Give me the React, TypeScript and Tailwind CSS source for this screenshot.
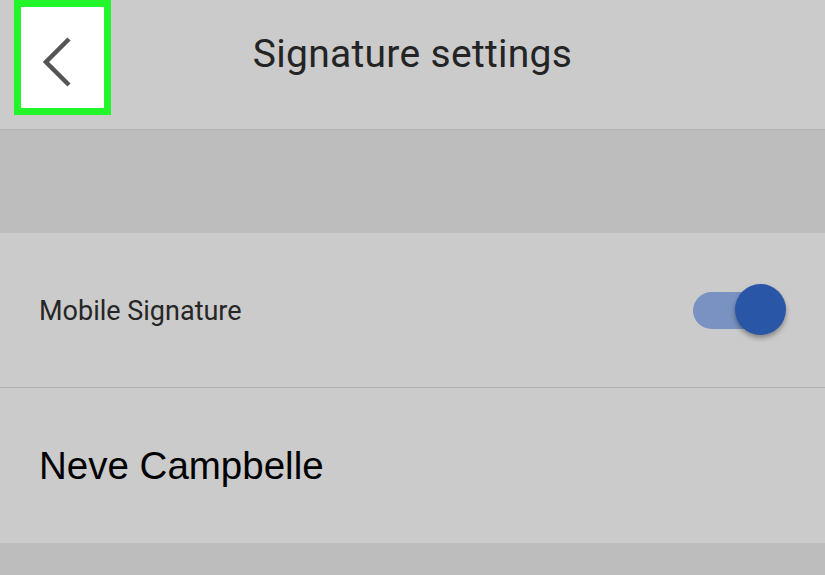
import React from "react";

export default function App() {
  return (
    <div className="w-[825px] h-[575px] overflow-hidden bg-[#cbcbcb] flex flex-col" style={{ fontFamily: "Roboto, 'Liberation Sans', sans-serif" }}>
      <div className="relative h-[130px] shrink-0 border-b border-[#b4b4b4] flex items-center justify-center">
        <div className="absolute left-[14px] top-0 w-[97px] h-[115px] border-[7px] border-[#22f52a] bg-white flex items-center justify-center">
          <svg width="40" height="60" viewBox="0 0 40 60">
            <path d="M26 11 L3 34 L26 57" fill="none" stroke="#555" strokeWidth="4.5" strokeLinecap="butt" strokeLinejoin="miter" />
          </svg>
        </div>
        <div className="text-[39px] text-[#242424] -mt-[20px] tracking-[0.3px]">Signature settings</div>
      </div>
      <div className="h-[103px] shrink-0 bg-[#bdbdbd]" />
      <div className="h-[155px] shrink-0 border-b border-[#b0b0b0] flex items-center justify-between pl-[39px] pr-[39px]">
        <div className="text-[27px] text-[#262626] mt-[2px]">Mobile Signature</div>
        <div className="relative w-[93px] h-[52px]">
          <div className="absolute left-0 top-[8px] w-[88px] h-[37px] rounded-full bg-[#7a92c2]" />
          <div className="absolute left-[42px] top-0 w-[51px] h-[51px] rounded-full bg-[#2956a6] shadow-[0_3px_5px_rgba(0,0,0,0.35)]" />
        </div>
      </div>
      <div className="h-[155px] shrink-0 flex items-center pl-[39px]">
        <div className="text-[38.5px] text-black" style={{ fontFamily: "'Liberation Sans', Arial, sans-serif" }}>Neve Campbelle</div>
      </div>
      <div className="flex-1 bg-[#bdbdbd]" />
    </div>
  );
}
